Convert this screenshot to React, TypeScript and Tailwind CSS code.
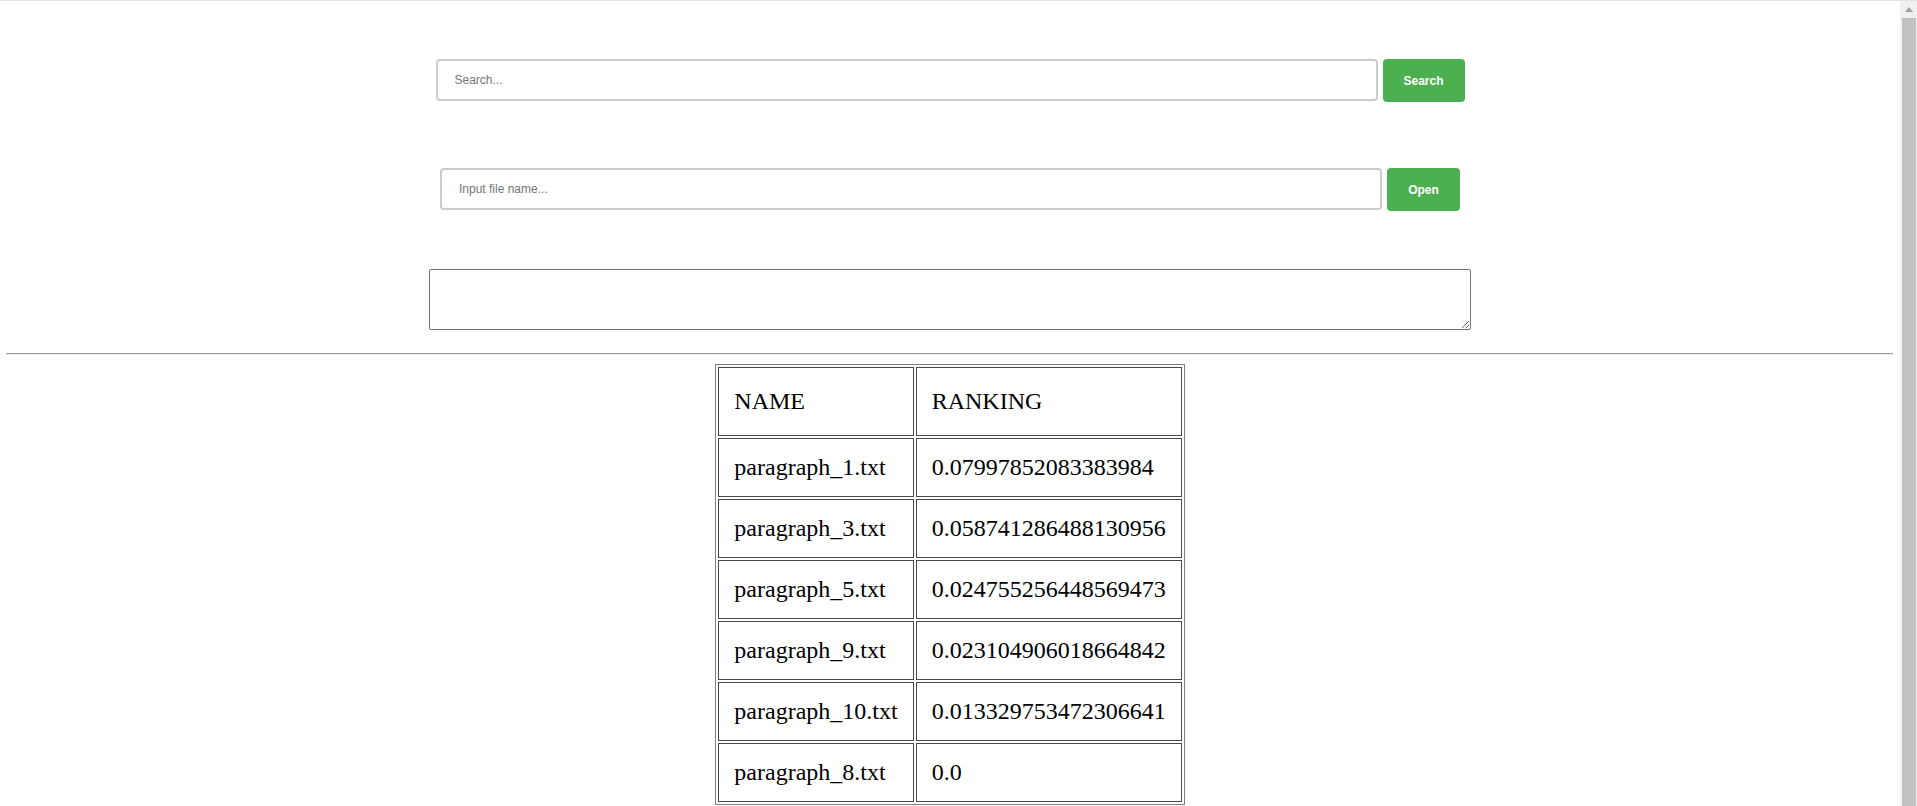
import React, { useState } from "react";

const rows = [
  { name: "paragraph_1.txt", rank: "0.07997852083383984" },
  { name: "paragraph_3.txt", rank: "0.058741286488130956" },
  { name: "paragraph_5.txt", rank: "0.024755256448569473" },
  { name: "paragraph_9.txt", rank: "0.023104906018664842" },
  { name: "paragraph_10.txt", rank: "0.013329753472306641" },
  { name: "paragraph_8.txt", rank: "0.0" },
];

const App: React.FC = () => {
  const [query, setQuery] = useState("");
  const [fileName, setFileName] = useState("");

  return (
    <div className="flex h-[806px] overflow-hidden border-t border-[#e3e3e3] bg-white">
      {/* page */}
      <div className="flex-1 flex flex-col items-center overflow-hidden">
        {/* search row */}
        <div className="shrink-0 mt-[58px] flex items-start gap-[5px] font-['Liberation_Sans',Arial,sans-serif]">
          <input
            type="text"
            value={query}
            onChange={(e) => setQuery(e.target.value)}
            placeholder="Search..."
            className="w-[942px] h-[42px] border-2 border-[#cccccc] rounded-[4px] px-[17px] text-[12px] text-black placeholder:text-[#757575] outline-none"
          />
          <button className="w-[82px] h-[43px] bg-[#4CAF50] text-white rounded-[4px] text-[12px] font-bold">
            Search
          </button>
        </div>

        {/* open file row */}
        <div className="shrink-0 mt-[66px] flex items-start gap-[5px] font-['Liberation_Sans',Arial,sans-serif]">
          <input
            type="text"
            value={fileName}
            onChange={(e) => setFileName(e.target.value)}
            placeholder="Input file name..."
            className="w-[942px] h-[42px] border-2 border-[#cccccc] rounded-[4px] px-[17px] text-[12px] text-black placeholder:text-[#757575] outline-none"
          />
          <button className="w-[73px] h-[43px] bg-[#4CAF50] text-white rounded-[4px] text-[12px] font-bold">
            Open
          </button>
        </div>

        {/* file contents */}
        <textarea className="shrink-0 mt-[58px] w-[1042px] h-[61px] border border-[#767676] rounded-[2px] outline-none" />

        <hr className="shrink-0 mt-[23px] self-stretch ml-[6px] mr-[7px] border-0 border-t border-t-[#9a9a9a] border-b border-b-[#eeeeee]" />

        {/* results */}
        <table className="shrink-0 mt-[9px] border-separate border-spacing-[2px] border border-[#808080] font-['Liberation_Serif','Times_New_Roman',serif] text-[24px] leading-[27px] text-black">
          <thead>
            <tr>
              <th className="border border-[#4a4a4a] px-[15px] pt-[20px] pb-[20px] text-left font-normal">NAME</th>
              <th className="border border-[#4a4a4a] px-[15px] pt-[20px] pb-[20px] text-left font-normal">RANKING</th>
            </tr>
          </thead>
          <tbody>
            {rows.map((r) => (
              <tr key={r.name}>
                <td className="border border-[#4a4a4a] p-[15px]">{r.name}</td>
                <td className="border border-[#4a4a4a] p-[15px]">{r.rank}</td>
              </tr>
            ))}
          </tbody>
        </table>
      </div>

      {/* scrollbar */}
      <div className="w-[17px] bg-[#f1f1f1] flex flex-col">
        <div className="h-[17px] flex items-center justify-center">
          <svg width="8" height="5" viewBox="0 0 8 5">
            <path d="M4 0 L8 5 L0 5 Z" fill="#a3a3a3" />
          </svg>
        </div>
        <div className="flex-1 ml-[2px] mr-[1px] bg-[#c1c1c1]" />
      </div>
    </div>
  );
};

export default App;
